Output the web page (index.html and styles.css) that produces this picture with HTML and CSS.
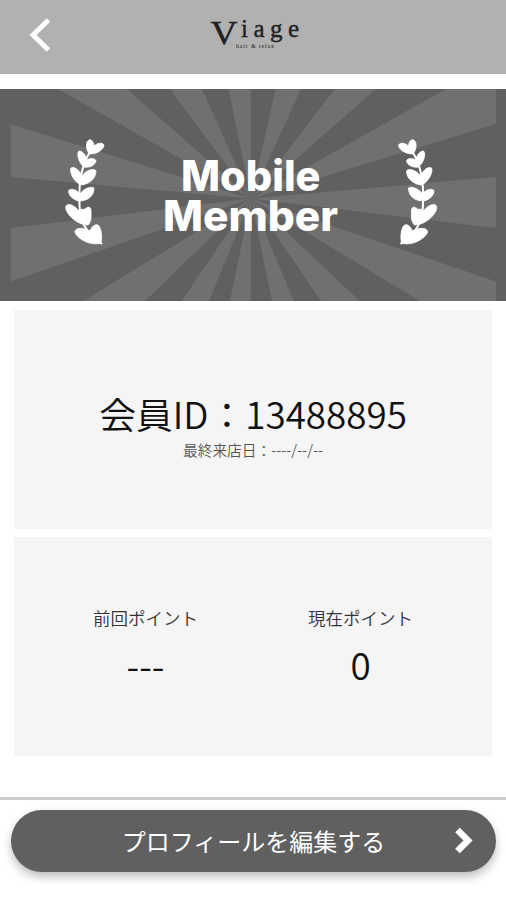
FILE: index.html
```
<!DOCTYPE html>
<html lang="ja">
<head>
	<meta charset="UTF-8">
	<title>Viage</title>
	<link rel="stylesheet" href="styles.css">
</head>
<body>

<header class="header">
	<svg class="back" width="24" height="38" viewBox="0 0 24 38"><path d="M20.500 3L5 18L20.500 33"/></svg>
	<svg class="logo" width="110" height="50" viewBox="0 0 110 50">
		<text class="logo-v" x="10.500" y="33.500" textLength="27" lengthAdjust="spacingAndGlyphs">V</text>
		<text class="logo-name" x="41" y="27" textLength="58">iage</text>
		<text class="logo-sub" x="36" y="38" textLength="38">hair &amp; relax</text>
	</svg>
</header>

<svg class="banner" width="506" height="212" viewBox="0 0 506 212">
	<g class="rays">
		<path d="M251 109.600L10.700 35.300V88z"/>
		<path d="M251 109.600L10.700 139V192.500z"/>
		<path d="M251 109.600L58 0H127z"/>
		<path d="M251 109.600L170 0H202z"/>
		<path d="M251 109.600L228.500 0H250.700z"/>
		<path d="M251 109.600L275.700 0H301z"/>
		<path d="M251 109.600L334.700 0H376z"/>
		<path d="M251 109.600L446 0H496V35z"/>
		<path d="M251 109.600L496 88V139z"/>
		<path d="M251 109.600L496 192.500V212H419.700z"/>
		<path d="M251 109.600L359.700 212H321z"/>
		<path d="M251 109.600L293.700 212H272z"/>
		<path d="M251 109.600L250.700 212H230z"/>
		<path d="M251 109.600L209 212H181.700z"/>
		<path d="M251 109.600L145 212H83z"/>
	</g>
	<defs>
		<g id="laurel">
			<path class="stem" d="M90 63C84 72 79 88 79.500 106C79 122 80 134 91 146L102 155"/>
			<path d="M89.500 65C86 61 85 53 89 51C92 50 94 54 94 57C97 54 102 53 104 56C104 60 98 65 89.500 65z"/>
			<path d="M84 78C79 74 76 65 79 62C83 62 86 67 87 71C90 69 95 69 96 72C95 76 90 79 84 78z"/>
			<path d="M81 96C74 93 69 83 71 79C76 77 80 83 82 87C86 81 94 79 96 82C96 89 90 95 81 96z"/>
			<path d="M79 112C73 111 67 105 69 101C73 99 78 102 80 105C84 99 92 97 94 99C94 107 88 112 79 112z"/>
			<path d="M88 136C76 136 64 123 66 117C69 113 76 118 79 122C81 119 84 121 85 120C88 117 91 118 91 121C91 127 92 132 88 136z"/>
			<path d="M101 154C89 158 74 147 75 142C77 138 85 139 90 142C92 137 96 134 99 137C102 142 102 149 101 154z"/>
		</g>
	</defs>
	<use class="leaf" href="#laurel"/>
	<use class="leaf" href="#laurel" transform="matrix(-1 0 0 1 502.500 0)"/>
	<text class="rank"><tspan x="181" y="102.300" textLength="139.500" lengthAdjust="spacingAndGlyphs">Mobile</tspan><tspan x="163" y="142.300" textLength="175" lengthAdjust="spacingAndGlyphs">Member</tspan></text>
</svg>

<main class="cards">
	<section class="card member">
		<h1 class="member-id">会員ID：13488895</h1>
		<p class="last-visit">最終来店日：----/--/--</p>
	</section>
	<section class="card points">
		<div class="point">
			<p class="point-label">前回ポイント</p>
			<p class="point-value">---</p>
		</div>
		<div class="point">
			<p class="point-label">現在ポイント</p>
			<p class="point-value">0</p>
		</div>
	</section>
</main>

<footer class="footer">
	<button class="edit">
		<span class="edit-label">プロフィールを編集する</span>
		<svg class="edit-arrow" width="20" height="28" viewBox="0 0 20 28"><path d="M3.500 3L14 13.500L3.500 24"/></svg>
	</button>
</footer>

</body>
</html>
```
FILE: styles.css
```
* {
	box-sizing: border-box;
}
body {
	margin: 0;
	height: 900px;
	overflow: hidden;
	background-color: #fff;
	color: #111;
	font-family: 'Noto Sans CJK JP', sans-serif;
	font-weight: 350;
}
h1, p {
	margin: 0;
	font-weight: 350;
}
.header {
	display: grid;
	grid-template-columns: 200px 110px 1fr;
	height: 74px;
	padding-top: 10px;
	background-color: #b1b1b1;
}
.back {
	margin: 7px 0 0 28px;
	fill: none;
	stroke: #fff;
	stroke-width: 5;
}
.logo {
	font-family: 'Liberation Serif', serif;
	fill: #222;
	stroke: #222;
	stroke-width: .4;
}
.logo-v {
	font-size: 34px;
}
.logo-name {
	font-size: 25px;
}
.logo-sub {
	font-size: 6px;
	stroke: none;
}
.banner {
	display: block;
	margin-top: 14.700px;
	background-color: #606060;
}
.rays {
	fill: #707070;
}
.leaf {
	fill: #fff;
	stroke: #fff;
	stroke-width: .8;
}
.stem {
	fill: none;
	stroke-width: 2;
}
.rank {
	fill: #fff;
	font-family: Inter, sans-serif;
	font-size: 42px;
	font-weight: 800;
}
.cards {
	display: grid;
	gap: 8px;
	padding: 9px 14px 0;
}
.card {
	height: 219px;
	background-color: #f5f5f5;
}
.member {
	padding-top: 76px;
	text-align: center;
}
.member-id {
	font-size: 36.800px;
	line-height: 54px;
}
.last-visit {
	color: #555;
	font-size: 14.700px;
	line-height: 20px;
}
.points {
	display: grid;
	grid-template-columns: 215px 215px;
	justify-content: center;
	padding-top: 68px;
	text-align: center;
}
.point-label {
	color: #333;
	font-size: 17.500px;
	line-height: 26px;
}
.point-value {
	font-size: 36.800px;
	line-height: 54px;
	margin-top: 6px;
}
.footer {
	margin-top: 41px;
	padding: 10px 10px 0 11px;
	border-top: 3px solid #ccc;
}
.edit {
	display: grid;
	grid-template-columns: 42px 1fr 42px;
	align-items: center;
	width: 100%;
	height: 62px;
	padding: 0;
	border: 0;
	border-radius: 31px;
	background-color: #606060;
	color: #fff;
	font-family: inherit;
	font-size: 24px;
	box-shadow: 0 5px 10px rgba(0, 0, 0, .25);
}
.edit-label {
	grid-column: 2;
}
.edit-arrow {
	fill: none;
	stroke: #fff;
	stroke-width: 6.500;
}
```
